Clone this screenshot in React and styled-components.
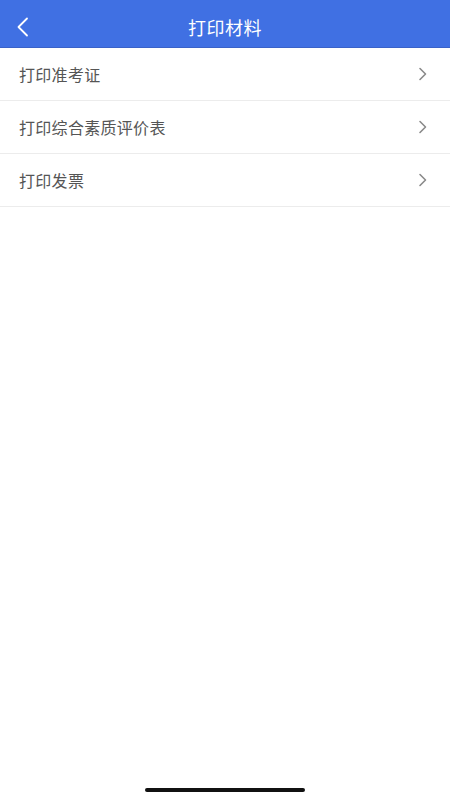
import React from "react";
import styled, { createGlobalStyle } from "styled-components";

const GlobalStyle = createGlobalStyle`
  html, body {
    margin: 0;
    padding: 0;
    background: #ffffff;
    font-family: "Noto Sans CJK SC", "Noto Sans", sans-serif;
  }
`;

const items = ["打印准考证", "打印综合素质评价表", "打印发票"];

const App = () => {
  return (
    <Page>
      <GlobalStyle />
      <Header>
        <BackButton aria-label="返回">
          <svg width="14" height="20" viewBox="0 0 14 20" fill="none">
            <path
              d="M11 1.5L2.5 10L11 18.5"
              stroke="#ffffff"
              strokeWidth="1.8"
              strokeLinecap="round"
              strokeLinejoin="round"
            />
          </svg>
        </BackButton>
        <Title>打印材料</Title>
      </Header>
      <List>
        {items.map((label) => (
          <Row key={label}>
            <Label>{label}</Label>
            <svg width="10" height="14" viewBox="0 0 10 14" fill="none">
              <path
                d="M2 1.5L7.5 7L2 12.5"
                stroke="#8a8a8a"
                strokeWidth="1.6"
                strokeLinecap="round"
                strokeLinejoin="round"
              />
            </svg>
          </Row>
        ))}
      </List>
      <Spacer />
      <HomeBar />
    </Page>
  );
};

export default App;

const Page = styled.div`
  width: 450px;
  height: 800px;
  display: flex;
  flex-direction: column;
  background: #ffffff;
`;

const Header = styled.header`
  position: relative;
  box-sizing: border-box;
  height: 48px;
  padding-top: 7px;
  background: #4070e3;
  border-bottom: 1px solid #3a62c8;
  display: flex;
  align-items: center;
  justify-content: center;
`;

const BackButton = styled.button`
  position: absolute;
  left: 11px;
  top: 12px;
  width: 24px;
  height: 30px;
  padding: 0;
  border: 0;
  background: transparent;
  display: flex;
  align-items: center;
  justify-content: center;
`;

const Title = styled.h1`
  margin: 0;
  font-size: 18px;
  font-weight: 400;
  color: #ffffff;
  letter-spacing: 0.5px;
`;

const List = styled.div`
  display: flex;
  flex-direction: column;
`;

const Row = styled.div`
  height: 52px;
  padding: 0 22px 0 19px;
  display: flex;
  align-items: center;
  justify-content: space-between;
  border-bottom: 1px solid #ececec;
`;

const Label = styled.span`
  font-size: 16px;
  color: #555555;
  letter-spacing: 0.3px;
`;

const Spacer = styled.div`
  flex: 1;
`;

const HomeBar = styled.div`
  align-self: center;
  width: 160px;
  height: 4px;
  border-radius: 2px;
  background: #111111;
  margin-bottom: 8px;
`;
